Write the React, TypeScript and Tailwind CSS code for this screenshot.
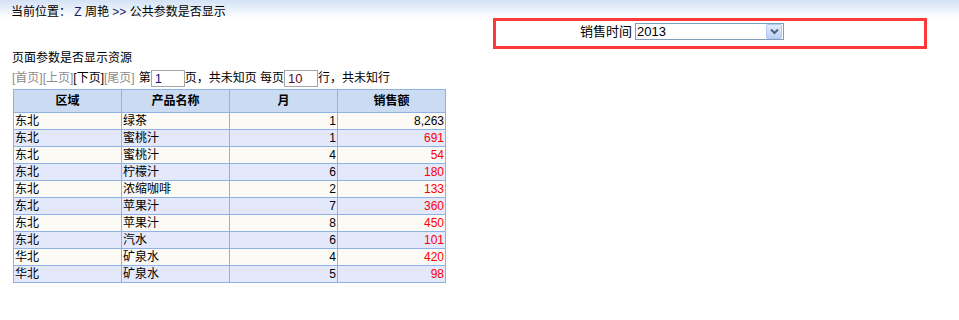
import React from 'react';

const FONT = '"Liberation Sans", "Noto Sans CJK SC", Arial, sans-serif';

interface Row {
  region: string;
  product: string;
  month: number;
  sales: string;
  highlight: boolean;
}

const rows: Row[] = [
  { region: '东北', product: '绿茶', month: 1, sales: '8,263', highlight: false },
  { region: '东北', product: '蜜桃汁', month: 1, sales: '691', highlight: true },
  { region: '东北', product: '蜜桃汁', month: 4, sales: '54', highlight: true },
  { region: '东北', product: '柠檬汁', month: 6, sales: '180', highlight: true },
  { region: '东北', product: '浓缩咖啡', month: 2, sales: '133', highlight: true },
  { region: '东北', product: '苹果汁', month: 7, sales: '360', highlight: true },
  { region: '东北', product: '苹果汁', month: 8, sales: '450', highlight: true },
  { region: '东北', product: '汽水', month: 6, sales: '101', highlight: true },
  { region: '华北', product: '矿泉水', month: 4, sales: '420', highlight: true },
  { region: '华北', product: '矿泉水', month: 5, sales: '98', highlight: true },
];

function YearSelect() {
  return (
    <div className="flex h-[17px] w-[149px] items-center justify-between border border-[#7f9db9] bg-white">
      <span className="pl-px text-[13px] leading-[15px] text-black">2013</span>
      <span className="mr-px flex h-[15px] w-[16px] items-center justify-center rounded-[2px] border border-[#b4c8ef] bg-gradient-to-b from-[#e4ecfd] to-[#bcd0f8]">
        <svg width="9" height="7" viewBox="0 0 9 7">
          <path d="M1 1.5 L4.5 5 L8 1.5" fill="none" stroke="#4d6185" strokeWidth="2" />
        </svg>
      </span>
    </div>
  );
}

function PageInput({ value, color }: { value: string; color: string }) {
  return (
    <span
      className="flex h-[17px] w-[34px] items-center border border-[#a5a5a5] bg-white pl-[3px] text-[13px] leading-[15px]"
      style={{ color }}
    >
      {value}
    </span>
  );
}

export default function App() {
  return (
    <div className="min-h-[320px] w-[959px] bg-white text-black" style={{ fontFamily: FONT }}>
      {/* breadcrumb bar */}
      <div className="h-[18px] bg-gradient-to-b from-[#d3e2f5] to-white pl-[11px] pt-[3px] text-[12px] leading-[18px]">
        当前位置： <span className="text-[#1a1a6a]">Z</span> 周艳 <span className="text-[#1a1a6a]">&gt;&gt;</span> 公共参数是否显示
      </div>

      {/* query box */}
      <div className="flex justify-end pr-[32px]">
        <div className="flex h-[31px] w-[434px] items-start border-[3px] border-[#ff3838] pl-[84px] pt-[2px]">
          <span className="mr-[3px] text-[13px] leading-[17px]">销售时间</span>
          <YearSelect />
        </div>
      </div>

      <div className="px-[12px]">
        <div className="mt-px text-[12px] leading-[16px]">页面参数是否显示资源</div>

        {/* pager */}
        <div className="mt-px flex h-[22px] items-center text-[12px] leading-[16px]">
          <span className="text-[#8c8c8c]">[首页][上页]</span>
          <span>[下页]</span>
          <span className="text-[#8c8c8c]">[尾页]</span>
          <span className="ml-[4px]">第</span>
          <PageInput value="1" color="#10207a" />
          <span>页，共未知页 每页</span>
          <PageInput value="10" color="#5a0a30" />
          <span>行，共未知行</span>
        </div>

        {/* data table */}
        <div className="ml-px grid w-[433px] grid-cols-[107px_107px_107px_107px] gap-px border border-[#8eb3e3] bg-[#8eb3e3] text-[12px]">
          {['区域', '产品名称', '月', '销售额'].map((h) => (
            <div key={h} className="h-[22px] bg-[#cbdcf2] text-center font-bold leading-[22px]">
              {h}
            </div>
          ))}
          {rows.map((r, i) => {
            const bg = i % 2 === 0 ? 'bg-[#fbfaf5]' : 'bg-[#e3e8fb]';
            return (
              <React.Fragment key={i}>
                <div className={`h-[16px] pl-px leading-[16px] ${bg}`}>{r.region}</div>
                <div className={`h-[16px] pl-px leading-[16px] ${bg}`}>{r.product}</div>
                <div className={`h-[16px] pr-px text-right leading-[16px] ${bg}`}>{r.month}</div>
                <div
                  className={`h-[16px] pr-px text-right leading-[16px] ${bg} ${r.highlight ? 'text-[#ff0000]' : 'text-black'}`}
                >
                  {r.sales}
                </div>
              </React.Fragment>
            );
          })}
        </div>
      </div>
    </div>
  );
}
